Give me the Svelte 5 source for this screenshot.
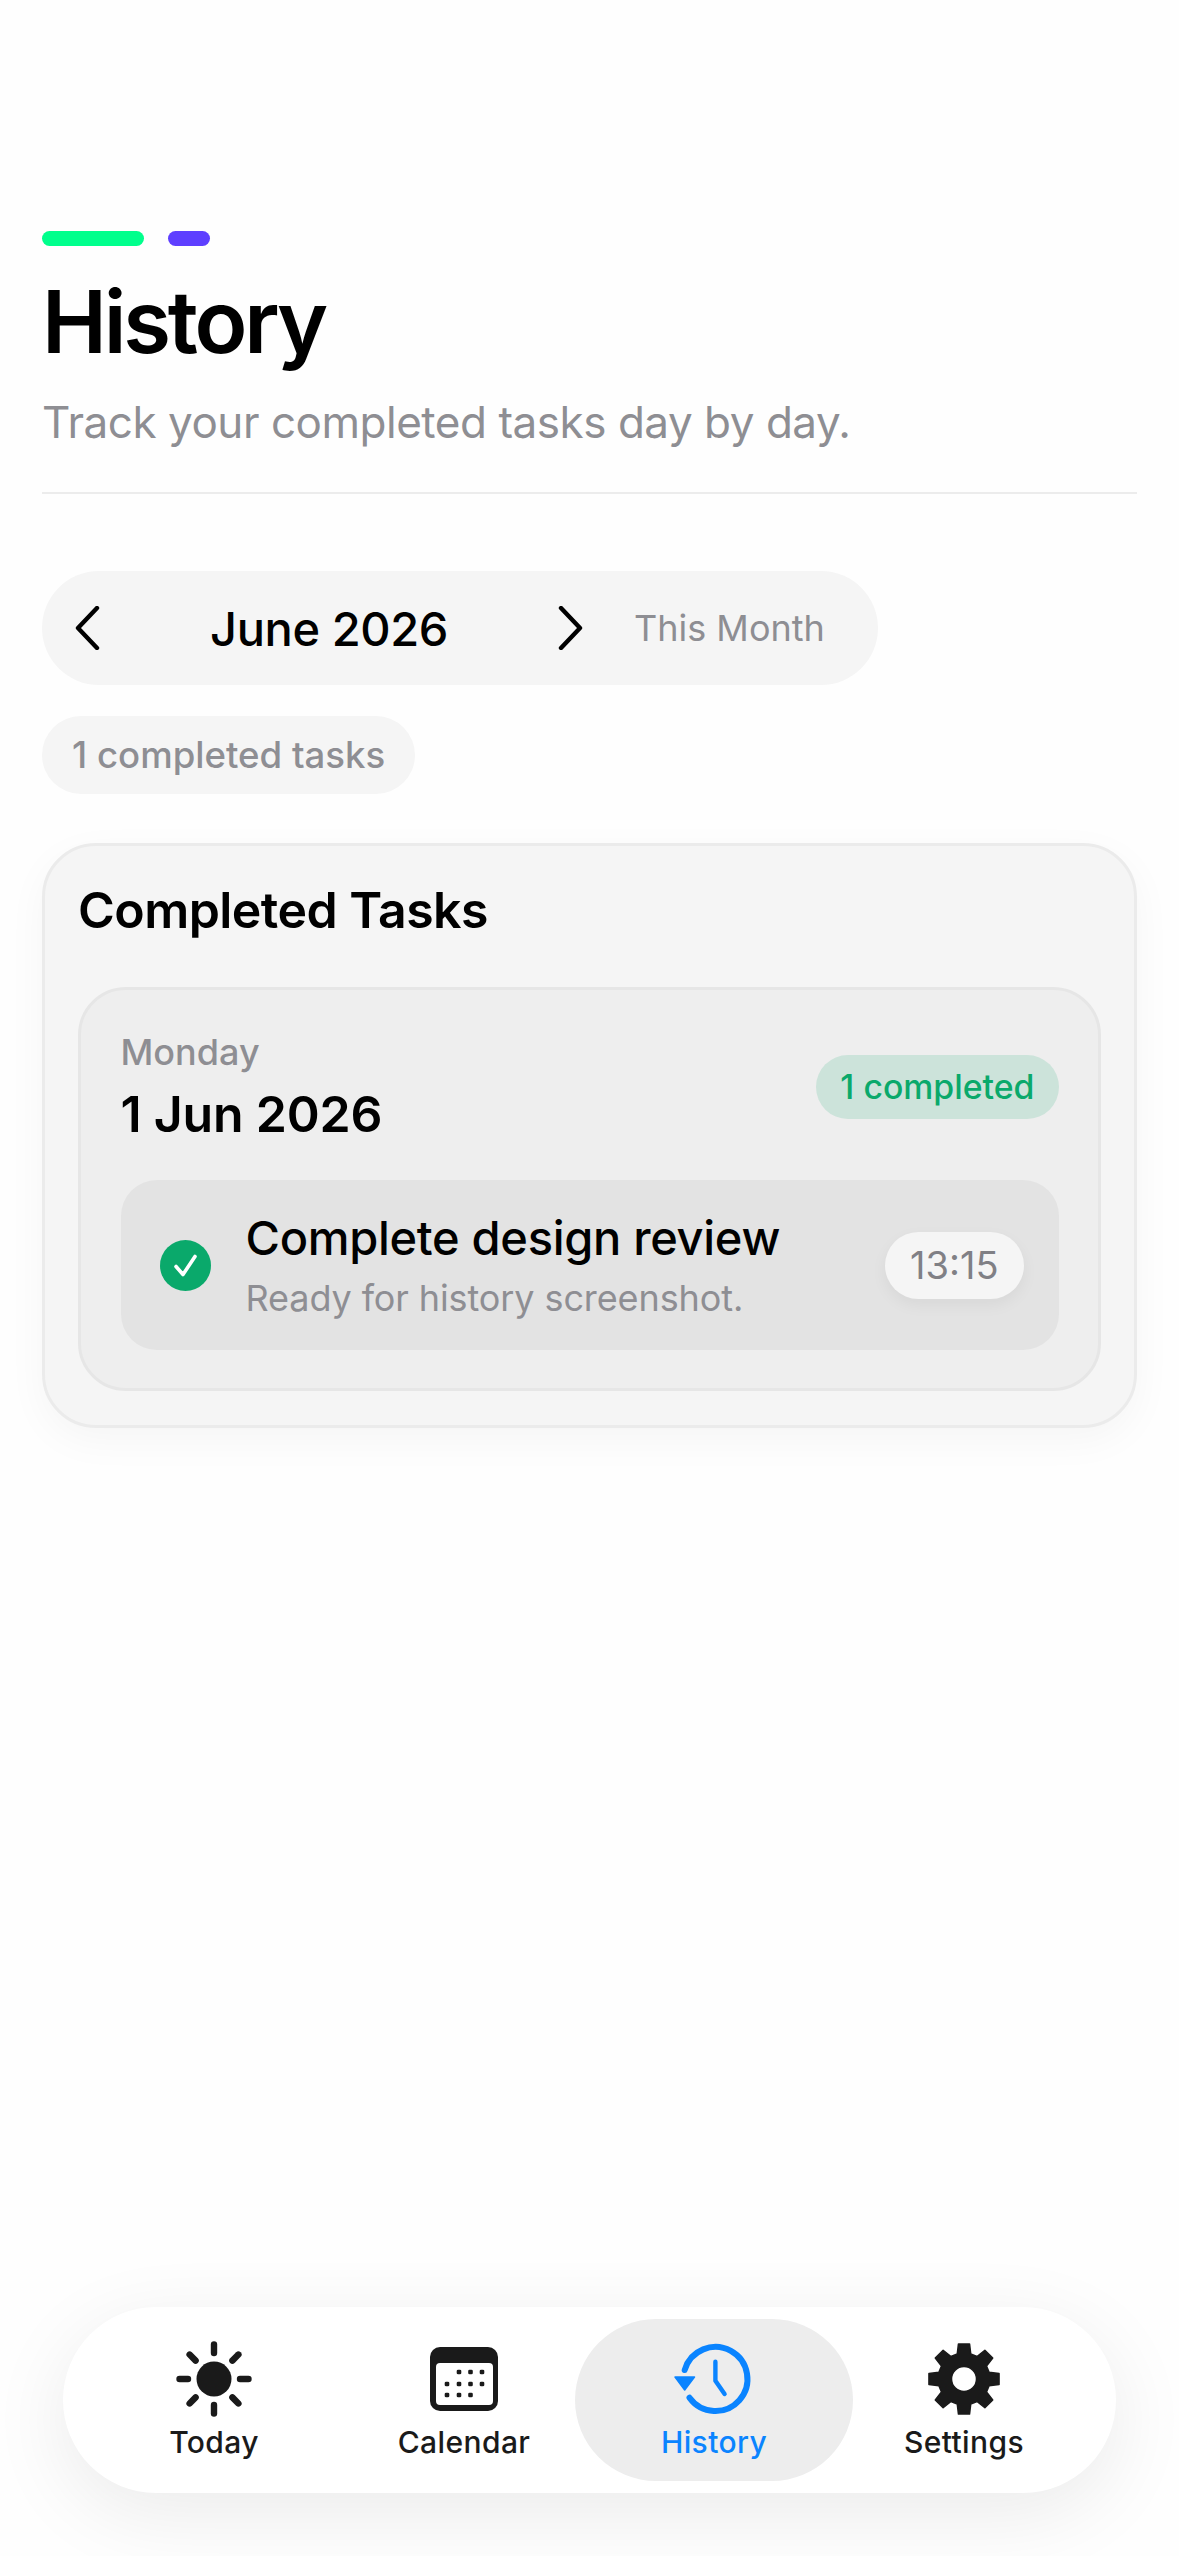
<script>
  const tabs = ['Today', 'Calendar', 'History', 'Settings'];
  const rays = [0, 45, 90, 135, 180, 225, 270, 315];
  const dots = [
    [33, 31], [44.500, 31], [56, 31],
    [21, 43], [33, 43], [44.500, 43], [56, 43],
    [21, 54], [33, 54], [44.500, 54]
  ];
  function gearPath() {
    const n = 8, out = 35.5, inn = 26;
    let d = '';
    for (let i = 0; i < n; i++) {
      const a = (i * 360) / n - 90;
      const pts = [[inn, a - 15], [out, a - 9], [out, a + 9], [inn, a + 15]];
      for (const [r, t] of pts) {
        const rad = (t * Math.PI) / 180;
        d += (d ? 'L' : 'M') + (36 + r * Math.cos(rad)).toFixed(2) + ' ' + (36 + r * Math.sin(rad)).toFixed(2);
      }
    }
    return d + 'Z';
  }
  const gear = gearPath();
</script>

<div class="page">
  <header class="head">
    <div class="bars"><span class="bar green"></span><span class="bar purple"></span></div>
    <h1>History</h1>
    <p class="sub">Track your completed tasks day by day.</p>
  </header>

  <div class="month">
    <button class="chev" aria-label="Previous month">
      <svg width="26" height="44" viewBox="0 0 26 44"><path d="M23 2 4 22l19 20" fill="none" stroke="#000" stroke-width="4.4" stroke-linecap="round" stroke-linejoin="round"/></svg>
    </button>
    <span class="month-name">June 2026</span>
    <button class="chev" aria-label="Next month">
      <svg width="26" height="44" viewBox="0 0 26 44"><path d="M3 2l19 20L3 42" fill="none" stroke="#000" stroke-width="4.4" stroke-linecap="round" stroke-linejoin="round"/></svg>
    </button>
    <span class="this">This Month</span>
  </div>

  <div class="count">1 completed tasks</div>

  <section class="card">
    <h2>Completed Tasks</h2>
    <div class="day">
      <div class="day-head">
        <div>
          <div class="weekday">Monday</div>
          <div class="date">1 Jun 2026</div>
        </div>
        <span class="badge">1 completed</span>
      </div>
      <div class="task">
        <svg class="check" width="51" height="51" viewBox="0 0 51 51">
          <circle cx="25.5" cy="25.5" r="25.5" fill="#0aa96b"/>
          <path d="M16 26.5l7 8L35 16.5" fill="none" stroke="#fff" stroke-width="3.6" stroke-linecap="round" stroke-linejoin="round"/>
        </svg>
        <div class="task-text">
          <div class="task-title">Complete design review</div>
          <div class="task-note">Ready for history screenshot.</div>
        </div>
        <span class="time">13:15</span>
      </div>
    </div>
  </section>

  <nav class="tabbar">
    {#each tabs as t}
      <div class="tab" class:active={t === 'History'}>
        {#if t === 'Today'}
          <svg width="76" height="76" viewBox="0 0 76 76">
            <circle cx="38" cy="38" r="17.5" fill="#1a1a1a"/>
            {#each rays as r}
              <line x1="38" y1="3.5" x2="38" y2="12" stroke="#1a1a1a" stroke-width="6.4" stroke-linecap="round" transform="rotate({r} 38 38)"/>
            {/each}
          </svg>
        {:else if t === 'Calendar'}
          <svg width="76" height="76" viewBox="0 0 76 76">
            <rect x="4" y="6" width="68" height="64" rx="10" fill="#1a1a1a"/>
            <rect x="10" y="22" width="57" height="42" rx="4" fill="#fff"/>
            {#each dots as [x, y]}
              <rect x={x - 2.3} y={y - 2.3} width="4.6" height="4.6" rx="1.4" fill="#1a1a1a"/>
            {/each}
          </svg>
        {:else if t === 'History'}
          <svg class="hist" width="76" height="76" viewBox="0 0 76 76">
            <path d="M13.5 56.7A32 32 0 1 0 8.700 29" fill="none" stroke="#0a84ff" stroke-width="6" stroke-linecap="round"/>
            <path d="M-1 36H18.500L8.700 49Z" fill="#0a84ff" stroke="#0a84ff" stroke-width="1.500" stroke-linejoin="round"/>
            <path d="M39.400 20.700V39.700L48.600 53" fill="none" stroke="#0a84ff" stroke-width="4.400" stroke-linecap="round" stroke-linejoin="round"/>
          </svg>
        {:else}
          <svg width="76" height="76" viewBox="-2 -2 76 76">
            <path fill-rule="evenodd" d="{gear}M48.500 36a12.500 12.500 0 1 0-25 0a12.500 12.500 0 1 0 25 0Z" fill="#1a1a1a" stroke="#1a1a1a" stroke-width="1.500" stroke-linejoin="round"/>
          </svg>
        {/if}
        <span class="label">{t}</span>
      </div>
    {/each}
  </nav>
</div>

<style>
  :global(body) {
    margin: 0;
    background: #fefefe;
  }
  .page {
    height: 2556px;
    box-sizing: border-box;
    padding: 231px 42px 63px;
    display: flex;
    flex-direction: column;
    align-items: stretch;
    overflow: hidden;
    font-family: Inter, "Liberation Sans", sans-serif;
    color: #000;
  }
  .head {
    border-bottom: 2px solid #ececec;
    height: 261px;
    box-sizing: content-box;
  }
  .bars {
    display: flex;
    gap: 24px;
  }
  .bar {
    height: 15px;
    border-radius: 8px;
  }
  .green { width: 102px; background: #00ff8c; }
  .purple { width: 42px; background: #5e3fff; }
  h1 {
    margin: 26px 0 0;
    font-size: 87px;
    line-height: 100px;
    font-weight: 600;
    letter-spacing: -3.2px;
  }
  .sub {
    margin: 23px 0 0;
    font-size: 44px;
    line-height: 54px;
    color: #8e8e93;
    font-weight: 400;
    letter-spacing: -0.47px;
  }
  .month {
    margin-top: 77px;
    align-self: flex-start;
    width: 836px;
    height: 114px;
    box-sizing: border-box;
    border-radius: 57px;
    background: #f5f5f5;
    display: flex;
    align-items: center;
    padding-left: 32px;
  }
  .chev {
    all: unset;
    width: 26px;
    height: 44px;
    display: flex;
  }
  .month-name {
    width: 458px;
    text-align: center;
    font-size: 47px;
    font-weight: 500;
    letter-spacing: -0.4px;
  }
  .this {
    margin-left: 50px;
    font-size: 36px;
    color: #8e8e93;
  }
  .count {
    margin-top: 31px;
    align-self: flex-start;
    height: 78px;
    line-height: 78px;
    padding: 0 30px;
    border-radius: 39px;
    background: #f5f5f5;
    font-size: 36.6px;
    font-weight: 500;
    color: #8e8e93;
  }
  .card {
    margin-top: 49px;
    box-sizing: border-box;
    height: 585px;
    padding: 34px 33px;
    background: #f5f5f5;
    border: 3px solid #ebebeb;
    border-radius: 54px;
    box-shadow: 0 12px 40px rgba(0, 0, 0, 0.04);
  }
  h2 {
    margin: 0;
    font-size: 50px;
    line-height: 60px;
    font-weight: 600;
    letter-spacing: -0.55px;
  }
  .day {
    margin-top: 47px;
    box-sizing: border-box;
    height: 404px;
    padding: 33px 39.5px;
    background: #eeeeee;
    border: 3px solid #e6e6e6;
    border-radius: 48px;
  }
  .day-head {
    display: flex;
    align-items: center;
    justify-content: space-between;
    height: 128px;
  }
  .weekday {
    font-size: 36px;
    line-height: 44px;
    font-weight: 500;
    color: #8e8e93;
  }
  .date {
    margin-top: 10px;
    font-size: 50px;
    line-height: 60px;
    font-weight: 600;
    letter-spacing: -0.2px;
  }
  .badge {
    height: 64px;
    line-height: 64px;
    padding: 0 24px;
    border-radius: 32px;
    background: #cce3da;
    color: #0aa96b;
    font-size: 33.8px;
    font-weight: 500;
  }
  .task {
    margin-top: 29px;
    height: 170px;
    box-sizing: border-box;
    padding: 0 35px 0 39px;
    border-radius: 36px;
    background: #e3e3e3;
    display: flex;
    align-items: center;
  }
  .check { flex: none; }
  .task-text {
    margin-left: 35px;
    flex: 1;
  }
  .task-title {
    font-size: 47px;
    line-height: 60px;
    font-weight: 500;
    letter-spacing: -0.3px;
  }
  .task-note {
    margin-top: 6px;
    font-size: 36px;
    line-height: 48px;
    color: #8e8e93;
    letter-spacing: -0.1px;
  }
  .time {
    height: 67px;
    line-height: 67px;
    padding: 0 25px;
    border-radius: 34px;
    background: #f5f5f5;
    color: #808085;
    font-size: 38px;
    font-weight: 400;
    box-shadow: 0 6px 16px rgba(0, 0, 0, 0.05);
  }
  .tabbar {
    margin: auto 21px 0;
    height: 186px;
    box-sizing: border-box;
    padding: 12px 27px 0 26px;
    border-radius: 93px;
    background: #fff;
    box-shadow: 0 20px 80px rgba(0, 0, 0, 0.08);
    display: grid;
    grid-template-columns: repeat(4, 1fr);
    align-items: start;
  }
  .tab {
    height: 162px;
    margin: 0 -14px;
    display: flex;
    flex-direction: column;
    align-items: center;
    padding-top: 22px;
    box-sizing: border-box;
    border-radius: 81px;
    color: #1a1a1a;
  }
  .tab svg { display: block; }
  .tab svg.hist { overflow: visible; }
  .active {
    background: #ededed;
    color: #0a84ff;
  }
  .label {
    margin-top: 5px;
    font-size: 30px;
    line-height: 40px;
    font-weight: 500;
    letter-spacing: 0.4px;
  }
</style>
